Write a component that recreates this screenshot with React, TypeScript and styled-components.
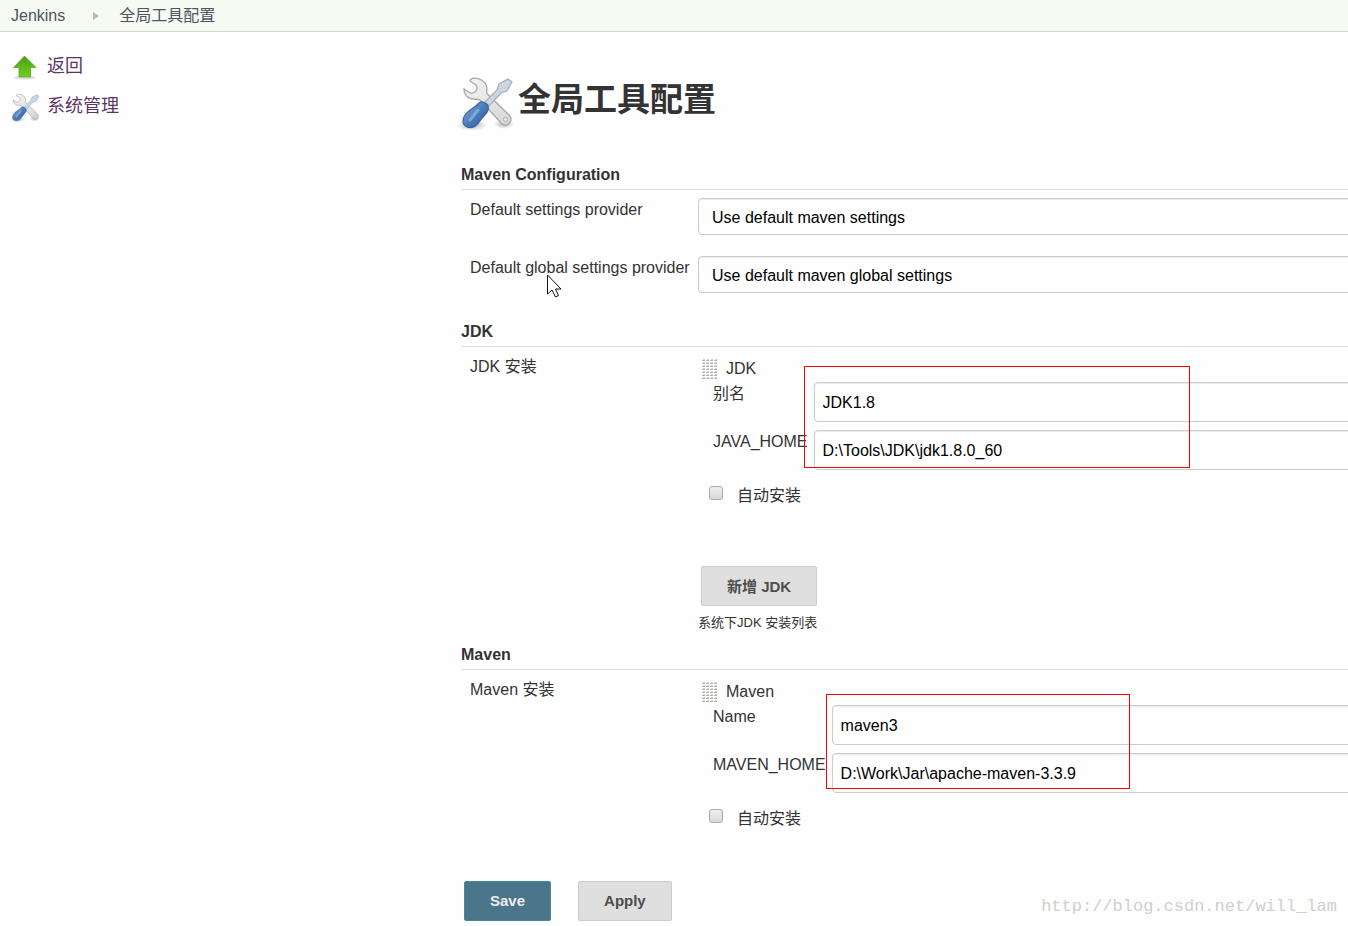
import React from "react";
import styled, { createGlobalStyle } from "styled-components";

const GlobalStyle = createGlobalStyle`
  * { box-sizing: border-box; }
  body {
    margin: 0;
    background: #fefefe;
    color: #333;
    font: 16px/18px "Liberation Sans", "Noto Sans CJK SC", sans-serif;
    overflow-x: hidden;
  }
  button, input, select { font-family: inherit; }
`;

const Page = styled.div`
  position: relative;
  min-height: 100vh;
  overflow: hidden;
`;

const Breadcrumbs = styled.nav`
  display: flex;
  align-items: center;
  height: 32px;
  padding: 0 11px;
  background: #f6faf2;
  border-bottom: 1px solid #d3d7cf;
`;

const Crumb = styled.a`
  color: #4d545d;
  text-decoration: none;
`;

const CrumbArrow = styled.svg`
  margin: 0 20px 0 28px;
`;

const Columns = styled.div`
  display: flex;
`;

const Side = styled.aside`
  display: flex;
  flex-direction: column;
  gap: 16px;
  flex: 0 0 461px;
  padding: 22px 10px;
`;

const Task = styled.a`
  display: flex;
  align-items: center;
  gap: 7px;
  height: 24px;
  color: #5c3566;
  font-size: 18px;
  text-decoration: none;

  svg {
    margin-top: 4px;
  }
`;

const Main = styled.main`
  flex: 1;
  min-width: 0;
  margin-right: -24px;
  padding: 44px 0 5px;
`;

const Heading = styled.h1`
  display: flex;
  align-items: flex-start;
  gap: 4px;
  height: 56px;
  margin: 0 0 34px -3px;
  font-size: 33px;
  line-height: 48px;
`;

const Section = styled.section<{ $gap: number }>`
  margin-bottom: ${(p) => p.$gap}px;
`;

const SectionTitle = styled.h2`
  margin: 0 0 8px;
  padding-bottom: 5px;
  border-bottom: 1px solid #ddd;
  font-size: 16px;
  line-height: 18px;
`;

const Row = styled.div`
  display: grid;
  grid-template-columns: 228px minmax(0, 1fr);
  align-items: start;
  padding-left: 9px;
`;

const RowLabel = styled.label`
  position: relative;
  padding-top: 2px;
  line-height: 20px;
  white-space: nowrap;
`;

const Pointer = styled.svg`
  position: absolute;
  left: 77px;
  top: 18px;
`;

const Select = styled.select`
  appearance: none;
  width: 100%;
  height: 37px;
  margin-bottom: 21px;
  padding: 2px 13px 0;
  border: 1px solid #ccc;
  border-radius: 4px;
  background: #fefefe;
  box-shadow: inset 0 1px 1px rgba(0, 0, 0, 0.08);
  color: #000;
  font-size: 16px;
`;

const ToolHeader = styled.div`
  display: flex;
  align-items: center;
  gap: 9px;
  height: 27px;
  padding-left: 4px;
`;

const Fields = styled.div`
  position: relative;
  display: grid;
  grid-template-columns: max-content minmax(0, 1fr);
  align-items: start;
  gap: 8px 6px;
  margin-left: 15px;
`;

const FieldLabel = styled.label`
  padding-top: 2px;
  line-height: 20px;
`;

const TextInput = styled.input`
  width: 100%;
  height: 40px;
  padding: 2px 8px 0;
  border: 1px solid #ccc;
  border-radius: 4px;
  background: #fefefe;
  box-shadow: inset 0 1px 1px rgba(0, 0, 0, 0.08);
  color: #000;
  font-size: 16px;
`;

const Highlight = styled.div<{ $left: number; $top: number; $width: number; $height: number }>`
  position: absolute;
  left: ${(p) => p.$left}px;
  top: ${(p) => p.$top}px;
  width: ${(p) => p.$width}px;
  height: ${(p) => p.$height}px;
  border: 1px solid #f00;
  pointer-events: none;
`;

const CheckLabel = styled.label`
  display: flex;
  align-items: center;
  gap: 14px;
  height: 34px;
  margin: 9px 0 0 11px;
`;

const Checkbox = styled.input`
  appearance: none;
  width: 14px;
  height: 14px;
  margin: 0 0 6px;
  border: 1px solid #aaa;
  border-radius: 3px;
  background: linear-gradient(#eee, #d9d9d9);
`;

const Button = styled.button<{ $primary?: boolean }>`
  height: 40px;
  padding: 0 25px 2px;
  border: 1px solid ${(p) => (p.$primary ? "#4788a0" : "#ccc")};
  border-radius: 2px;
  background: ${(p) => (p.$primary ? "#4b758b" : "#dfdfdf")};
  color: ${(p) => (p.$primary ? "#eee" : "#4d4d4d")};
  font-size: 15px;
  font-weight: bold;
`;

const AddTool = styled.div`
  padding: 53px 0 8px 3px;
`;

const Note = styled.div`
  font-size: 13px;
`;

const Actions = styled.div`
  display: flex;
  gap: 27px;
  padding-left: 3px;
`;

const Watermark = styled.div`
  position: absolute;
  right: 11px;
  bottom: 9px;
  color: #d0d0cc;
  font: 17px/20px "Liberation Mono", monospace;
`;

function ToolsIcon({ size }: { size: number }) {
  return (
    <svg width={size} height={size} viewBox="0 0 56 56" aria-hidden="true">
      <defs>
        <linearGradient id="steel" x1="0" y1="0" x2="1" y2="1">
          <stop offset="0" stopColor="#f5f5f5" />
          <stop offset="1" stopColor="#d5d5d5" />
        </linearGradient>
        <linearGradient id="handle" x1="0" y1="0" x2="1" y2="1">
          <stop offset="0" stopColor="#8fb4df" />
          <stop offset="0.5" stopColor="#4a7dbd" />
          <stop offset="1" stopColor="#2c5590" />
        </linearGradient>
        <radialGradient id="ground">
          <stop offset="0" stopColor="#000" stopOpacity="0.3" />
          <stop offset="1" stopColor="#000" stopOpacity="0" />
        </radialGradient>
      </defs>
      <ellipse cx="14" cy="49" rx="15" ry="6" fill="url(#ground)" />
      <ellipse cx="46" cy="48" rx="10" ry="5" fill="url(#ground)" />
      <path
        d="M14 2.500C20 1 28 5 29 12C29 15 28 16 29.500 18L51 39C56 44 50 52 44 48L23 25C21 23 19 23 16 23C10 23 6 19 6 13L12 17C17 18 21 13 18 9L12 5C12 4 13 3 14 2.500Z"
        fill="url(#steel)" stroke="#a8a8a8" strokeWidth="1.300"
      />
      <circle cx="47.500" cy="43.500" r="2" fill="#eee" stroke="#aaa" />
      <path d="M27 26L39 14L41 8L50 3L54 6L49 15L43 17L31 30Z" fill="#cbd6e2" stroke="#a2b0c0" strokeWidth="1.200" />
      <path
        d="M21 27C25 24 32 29 30 34C29 38 26 39 22 45C19 50 14 53 9 51C4 49 4 43 7 39C11 33 16 33 21 27Z"
        fill="url(#handle)" stroke="#3a659f" strokeWidth="1.200"
      />
      <path d="M20 34L12 44" stroke="#c0d7ef" strokeWidth="3" strokeLinecap="round" opacity="0.450" />
    </svg>
  );
}

function UpIcon() {
  return (
    <svg width="30" height="28" viewBox="0 0 30 28" aria-hidden="true">
      <defs>
        <linearGradient id="leaf" x1="0" y1="0" x2="0" y2="1">
          <stop offset="0" stopColor="#4c9a1c" />
          <stop offset="1" stopColor="#73d216" />
        </linearGradient>
      </defs>
      <ellipse cx="15" cy="23.500" rx="11" ry="2" fill="#000" opacity="0.120" />
      <path d="M14.500 2L26 13.500H20.500V23H9V13.500H3.500Z" fill="url(#leaf)" stroke="#5da53c" strokeWidth="0.800" />
    </svg>
  );
}

function Grip() {
  return (
    <svg width="15" height="20" aria-hidden="true">
      <defs>
        <pattern id="dots" width="4" height="3" patternUnits="userSpaceOnUse">
          <path d="M0 1h3v1H0z" fill="#b4b4ac" />
          <path d="M1 0h2v1H1z" fill="#d2d2ce" />
        </pattern>
      </defs>
      <rect width="15" height="20" fill="url(#dots)" />
    </svg>
  );
}

type Field = { id: string; label: string; value: string };
type Box = { left: number; top: number; width: number; height: number };

function Tool({ name, fields, box }: { name: string; fields: Field[]; box: Box }) {
  return (
    <>
      <ToolHeader>
        <Grip />
        {name}
      </ToolHeader>
      <Fields>
        {fields.map((f) => (
          <React.Fragment key={f.id}>
            <FieldLabel htmlFor={f.id}>{f.label}</FieldLabel>
            <TextInput id={f.id} type="text" defaultValue={f.value} />
          </React.Fragment>
        ))}
        <Highlight $left={box.left} $top={box.top} $width={box.width} $height={box.height} />
      </Fields>
      <CheckLabel>
        <Checkbox type="checkbox" />
        自动安装
      </CheckLabel>
    </>
  );
}

export default function App() {
  return (
    <Page>
      <GlobalStyle />
      <Breadcrumbs>
        <Crumb href="#">Jenkins</Crumb>
        <CrumbArrow width="6" height="10" aria-hidden="true">
          <path d="M0 1L6 5L0 9Z" fill="#babdb6" />
        </CrumbArrow>
        <Crumb href="#">全局工具配置</Crumb>
      </Breadcrumbs>
      <Columns>
        <Side>
          <Task href="#"><UpIcon />返回</Task>
          <Task href="#"><ToolsIcon size={30} />系统管理</Task>
        </Side>
        <Main>
          <Heading><ToolsIcon size={56} />全局工具配置</Heading>
          <Section $gap={9}>
            <SectionTitle>Maven Configuration</SectionTitle>
            <Row>
              <RowLabel htmlFor="settings">Default settings provider</RowLabel>
              <Select id="settings"><option>Use default maven settings</option></Select>
            </Row>
            <Row>
              <RowLabel htmlFor="global">
                Default global settings provider
                <Pointer width="15" height="24" viewBox="0 0 15 24" aria-hidden="true">
                  <path d="M.5 1V20L5 16L8.500 23L11.500 21.500L8.500 15H14Z" fill="#fff" stroke="#112" />
                </Pointer>
              </RowLabel>
              <Select id="global"><option>Use default maven global settings</option></Select>
            </Row>
          </Section>
          <Section $gap={14}>
            <SectionTitle>JDK</SectionTitle>
            <Row>
              <RowLabel as="div">JDK 安装</RowLabel>
              <div>
                <Tool
                  name="JDK"
                  fields={[
                    { id: "jdk-name", label: "别名", value: "JDK1.8" },
                    { id: "jdk-home", label: "JAVA_HOME", value: "D:\\Tools\\JDK\\jdk1.8.0_60" },
                  ]}
                  box={{ left: 91, top: -16, width: 386, height: 102 }}
                />
                <AddTool><Button type="button">新增 JDK</Button></AddTool>
                <Note>系统下JDK 安装列表</Note>
              </div>
            </Row>
          </Section>
          <Section $gap={45}>
            <SectionTitle>Maven</SectionTitle>
            <Row>
              <RowLabel as="div">Maven 安装</RowLabel>
              <div>
                <Tool
                  name="Maven"
                  fields={[
                    { id: "maven-name", label: "Name", value: "maven3" },
                    { id: "maven-home", label: "MAVEN_HOME", value: "D:\\Work\\Jar\\apache-maven-3.3.9" },
                  ]}
                  box={{ left: 113, top: -11, width: 304, height: 95 }}
                />
              </div>
            </Row>
          </Section>
          <Actions>
            <Button type="button" $primary>Save</Button>
            <Button type="button">Apply</Button>
          </Actions>
        </Main>
      </Columns>
      <Watermark>http://blog.csdn.net/will_lam</Watermark>
    </Page>
  );
}
